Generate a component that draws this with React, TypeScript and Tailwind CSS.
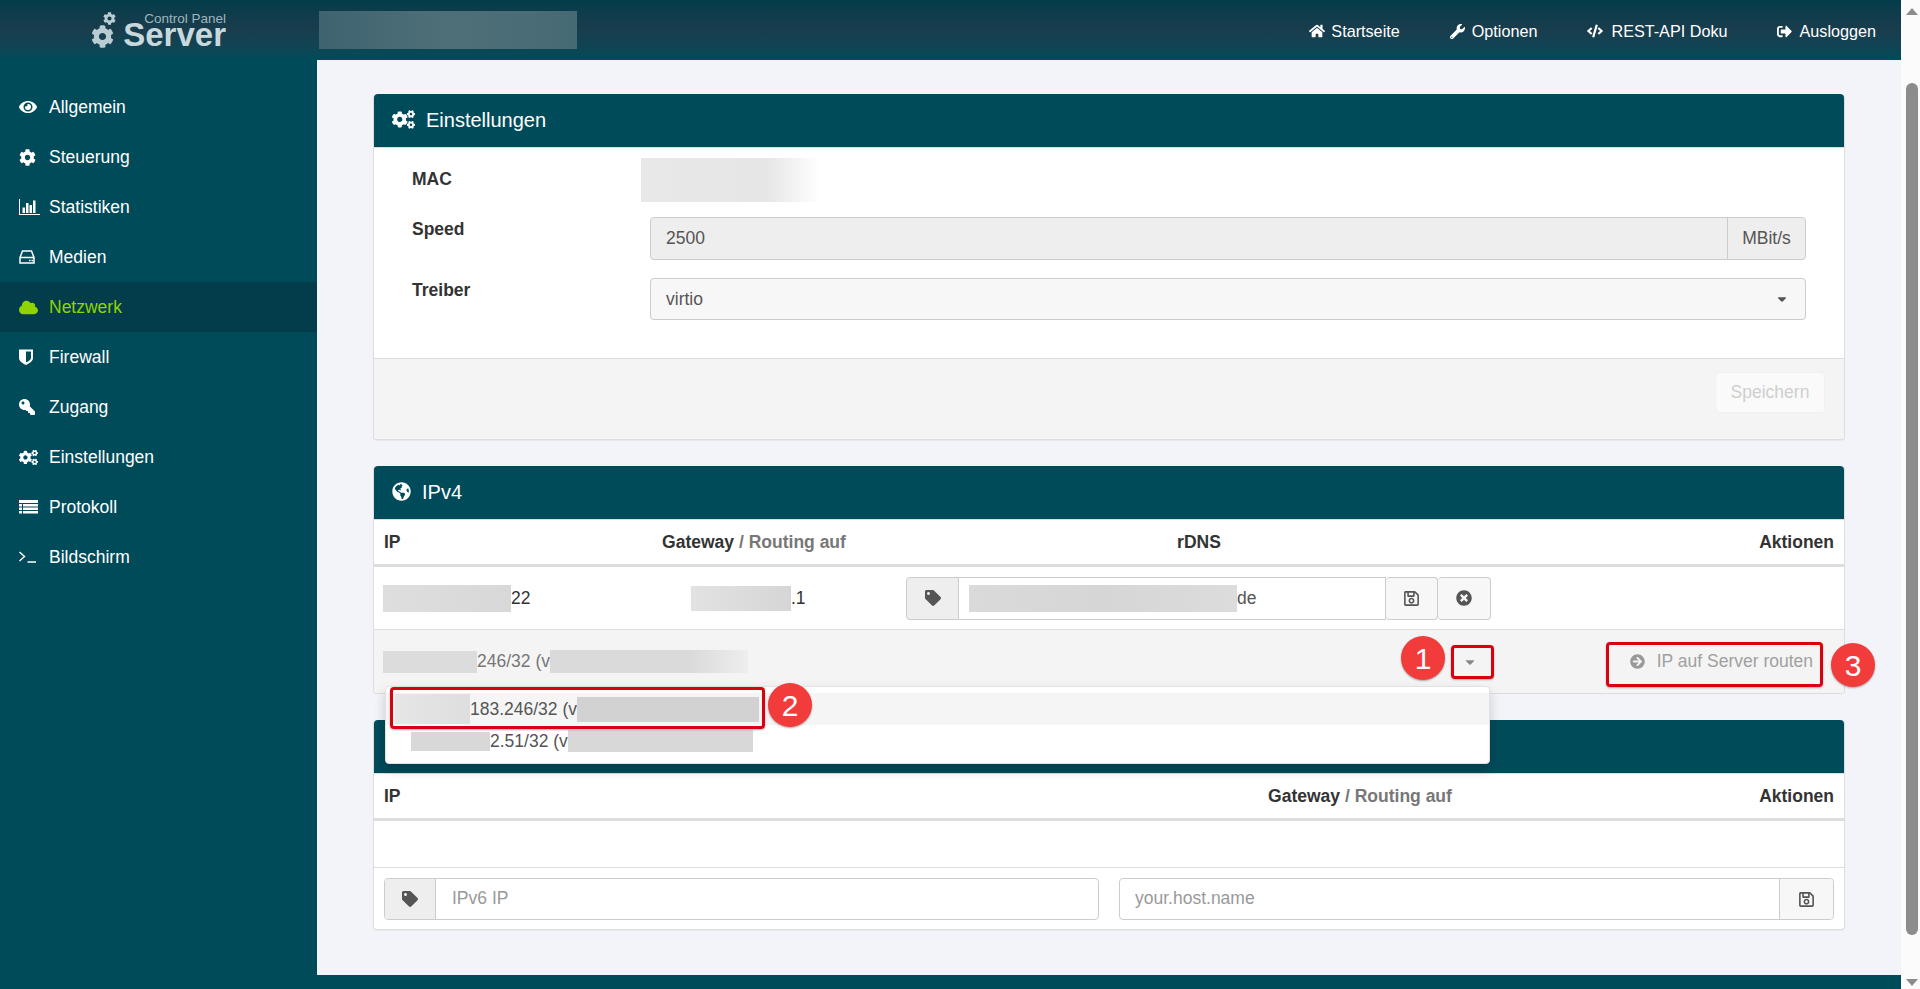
import { ReactElement, ReactNode } from "react";
import {
  FaArrowCircleRight,
  FaCaretDown,
  FaCloud,
  FaCode,
  FaCog,
  FaCogs,
  FaEye,
  FaGlobeAmericas,
  FaHome,
  FaKey,
  FaRegSave,
  FaSignOutAlt,
  FaTag,
  FaTimesCircle,
  FaWrench,
} from "react-icons/fa";

function ChartIcon(): ReactElement {
  return (
    <svg width="21" height="16" viewBox="0 0 21 16" fill="currentColor">
      <path d="M0 0h1v15h20v1H0z" />
      <path d="M3.500 8.500h2.500v5.500H3.500zM7 4h2.500v10H7zM10.500 6h2.500v8h-2.500zM14 1.500h2.500v12.500H14z" />
    </svg>
  );
}

function RowsIcon(): ReactElement {
  return (
    <svg width="19" height="15" viewBox="0 0 19 15" fill="currentColor">
      <path d="M0 0h19v3H0zM0 4h3v2.500H0zM4 4h15v2.500H4zM0 7.500h3V10H0zM4 7.500h15V10H4zM0 11h3v2.500H0zM4 11h15v2.500H4z" />
    </svg>
  );
}

function DriveIcon(): ReactElement {
  return (
    <svg width="16" height="14" viewBox="0 0 16 14" fill="none" stroke="currentColor" strokeWidth="1.500">
      <path d="M3.500 1h9l2.500 6.500V13H1V7.500zM1 7.500h14" />
      <path d="M10 10.500h1.500M12.500 10.500H14" />
    </svg>
  );
}

function ShieldIcon(): ReactElement {
  return (
    <svg width="14" height="16" viewBox="0 0 14 16" fill="currentColor">
      <path
        fillRule="evenodd"
        d="M0 .500h14v8.500c0 3.500-4 5.500-7 7-3-1.500-7-3.500-7-7zM7 2.500v11c2-1 5-2.500 5-5V2.500z"
      />
    </svg>
  );
}

function PromptIcon(): ReactElement {
  return (
    <svg width="17" height="12" viewBox="0 0 17 12" fill="none" stroke="currentColor" strokeWidth="1.400">
      <path d="M.500 1l5 4.500-5 4.500M8.500 11H17" />
    </svg>
  );
}

interface NavItem {
  label: string;
  icon: ReactNode;
  active?: boolean;
}

const navItems: NavItem[] = [
  { label: "Allgemein", icon: <FaEye size={18} /> },
  { label: "Steuerung", icon: <FaCog size={17} /> },
  { label: "Statistiken", icon: <ChartIcon /> },
  { label: "Medien", icon: <DriveIcon /> },
  { label: "Netzwerk", icon: <FaCloud size={19} />, active: true },
  { label: "Firewall", icon: <ShieldIcon /> },
  { label: "Zugang", icon: <FaKey size={16} className="-scale-x-100" /> },
  { label: "Einstellungen", icon: <FaCogs size={19} /> },
  { label: "Protokoll", icon: <RowsIcon /> },
  { label: "Bildschirm", icon: <PromptIcon /> },
];

function Blur({ className }: { className: string }): ReactElement {
  return <div className={`shrink-0 ${className}`} />;
}

function Badge({ n, className }: { n: number; className: string }): ReactElement {
  return (
    <div
      className={`absolute z-20 w-[44px] h-[44px] rounded-full bg-[#f23c3c] text-white text-[30px] flex items-center justify-center shadow-[0_1px_2px_rgba(0,0,0,0.35)] ${className}`}
    >
      {n}
    </div>
  );
}

function RedBox({ className }: { className: string }): ReactElement {
  return <div className={`absolute z-20 border-[3px] border-[#d9000f] rounded-[4px] shadow-[0_1px_2px_rgba(0,0,0,0.3)] ${className}`} />;
}

function PanelHeader({ icon, title }: { icon: ReactNode; title: string }): ReactElement {
  return (
    <div className="h-[54px] pb-[2px] bg-[#004b5a] text-white rounded-t-[4px] flex items-center pl-[18px] gap-[11px] text-[20px] border-b border-[#dddddd]">
      {icon}
      <span>{title}</span>
    </div>
  );
}

export default function App(): ReactElement {
  return (
    <div className="h-[989px] w-[1920px] overflow-hidden flex font-['Liberation_Sans',Arial,sans-serif] text-[17.5px] text-[#333333]">
      <div className="w-[1901px] flex flex-col">
        {/* top bar */}
        <header className="h-[60px] shrink-0 bg-gradient-to-b from-[#033c4a] via-[#193d4d] to-[#004b5a] flex items-center text-white">
          <div className="w-[317px] shrink-0 self-start pt-[12px] pl-[91px] flex items-start gap-[6px] text-[#c8d8dd]">
            <div className="flex flex-col items-end w-[25px] text-[#b8ccd1]">
              <FaCog size={13} />
              <FaCog size={23} className="mr-[2px]" />
            </div>
            <div className="flex flex-col items-end w-[104px]">
              <span className="text-[13.500px] leading-[13px] text-[#9fb6bc] whitespace-nowrap">Control Panel</span>
              <span className="text-[33px] leading-[19px] font-bold">Server</span>
            </div>
          </div>
          <Blur className="w-[258px] h-[38px] ml-[2px] bg-gradient-to-r from-[#3e6470] via-[#4f6f78] to-[#466a75]" />
          <nav className="ml-auto pr-[25px] pt-[3px] flex items-center gap-[50px] text-[16.200px]">
            <div className="flex items-center gap-[6px]"><FaHome size={16} />Startseite</div>
            <div className="flex items-center gap-[7px]"><FaWrench size={15} />Optionen</div>
            <div className="flex items-center gap-[8px]"><FaCode size={16} />REST-API Doku</div>
            <div className="flex items-center gap-[7px]"><FaSignOutAlt size={15} />Ausloggen</div>
          </nav>
        </header>

        <div className="flex flex-1 min-h-0">
          {/* sidebar */}
          <aside className="w-[317px] shrink-0 bg-[#004b5a] pt-[22px] text-white">
            {navItems.map((item: NavItem) => (
              <div
                key={item.label}
                className={`h-[50px] flex items-center pl-[19px] ${item.active ? "bg-[#033c4b] text-[#8fd400]" : ""}`}
              >
                <span className="w-[30px] flex items-center shrink-0">{item.icon}</span>
                {item.label}
              </div>
            ))}
          </aside>

          {/* main */}
          <main className="flex-1 bg-[#f3f4f9] pt-[34px] pl-[56px] pr-[56px] flex flex-col gap-[26px]">
            {/* Einstellungen */}
            <section className="border border-[#dddddd] border-t-0 rounded-[4px] bg-white shadow-[0_1px_1px_rgba(0,0,0,0.05)]">
              <PanelHeader icon={<FaCogs size={23} />} title="Einstellungen" />
              <div className="pl-[38px] pr-[38px] pt-[9px] pb-[38px]">
                <div className="flex h-[60px]">
                  <div className="w-[238px] pt-[9px] font-bold">MAC</div>
                  <Blur className="w-[179px] h-[44px] mt-[1px] -ml-[9px] bg-gradient-to-r from-[#e8e8e8] via-[#e6e6e6] via-70% to-white" />
                </div>
                <div className="flex">
                  <div className="w-[238px] -mt-[1px] font-bold">Speed</div>
                  <div className="flex-1 h-[43px] flex border border-[#cccccc] rounded-[4px] bg-[#eeeeee] text-[#555555]">
                    <div className="flex-1 flex items-center pl-[15px]">2500</div>
                    <div className="w-[78px] border-l border-[#cccccc] flex items-center justify-center">MBit/s</div>
                  </div>
                </div>
                <div className="flex mt-[18px]">
                  <div className="w-[238px] -mt-[1px] font-bold">Treiber</div>
                  <div className="flex-1 h-[42px] flex items-center justify-between border border-[#cccccc] rounded-[4px] bg-[#f7f7f7] text-[#555555] pl-[15px] pr-[16px]">
                    virtio
                    <FaCaretDown size={14} className="text-[#555555]" />
                  </div>
                </div>
              </div>
              <div className="h-[81px] bg-[#f4f4f4] border-t border-[#dddddd] rounded-b-[4px] flex justify-end pt-[14px] pr-[19px]">
                <div className="w-[110px] h-[41px] -mt-[1px] rounded-[4px] border border-[#f0f0f0] bg-[#fafafa] text-[#cfcfcf] flex items-center justify-center">
                  Speichern
                </div>
              </div>
            </section>

            {/* IPv4 */}
            <section className="border border-[#dddddd] border-t-0 rounded-[4px] bg-white">
              <PanelHeader icon={<FaGlobeAmericas size={19} />} title="IPv4" />
              <div className="h-[47px] grid grid-cols-[238px_284px_606px_1fr] items-center border-b-[3px] border-[#dddddd] font-bold">
                <div className="pl-[10px]">IP</div>
                <div className="text-center">
                  Gateway <span className="text-[#777777]">/ Routing auf</span>
                </div>
                <div className="text-center">rDNS</div>
                <div className="text-right pr-[10px]">Aktionen</div>
              </div>
              <div className="h-[63px] grid grid-cols-[238px_284px_606px_1fr] items-center border-b border-[#dddddd]">
                <div className="pl-[9px] flex items-center">
                  <Blur className="w-[128px] h-[27px] bg-gradient-to-r from-[#dedede] to-[#d8d8d8]" />
                  22
                </div>
                <div className="pl-[79px] flex items-center">
                  <Blur className="w-[100px] h-[25px] bg-gradient-to-r from-[#e2e2e2] to-[#d6d6d6]" />
                  .1
                </div>
                <div className="pl-[10px] flex h-[43px]">
                  <div className="w-[53px] flex items-center justify-center border border-[#cccccc] bg-[#eeeeee] rounded-l-[4px] text-[#555555]">
                    <FaTag size={16} />
                  </div>
                  <div className="w-[427px] flex items-center pl-[10px] border-y border-r border-[#cccccc] text-[#555555]">
                    <Blur className="w-[268px] h-[27px] bg-gradient-to-r from-[#dadada] via-[#d6d6d6] to-[#dcdcdc]" />
                    de
                  </div>
                  <div className="w-[52px] flex items-center justify-center border-y border-r border-[#cccccc] bg-[#f7f7f7] rounded-[4px] text-[#555555]">
                    <FaRegSave size={17} />
                  </div>
                  <div className="w-[53px] flex items-center justify-center border-y border-r border-[#cccccc] bg-[#f7f7f7] rounded-[4px] text-[#555555]">
                    <FaTimesCircle size={16} />
                  </div>
                </div>
              </div>
              <div className="relative h-[63px] bg-[#f4f4f4] rounded-b-[4px] flex items-center pl-[9px] pr-[31px] text-[#777777]">
                <div className="flex items-center">
                  <Blur className="w-[94px] h-[22px] bg-[#dcdcdc]" />
                  246/32 (v
                  <Blur className="w-[198px] h-[23px] bg-gradient-to-r from-[#dadada] via-[#dadada] via-70% to-[#eeeeee]" />
                </div>
                <div className="ml-auto mr-[139px] w-[42px] flex justify-center text-[#888888]">
                  <FaCaretDown size={14} />
                </div>
                <div className="flex items-center gap-[12px] text-[#a0a0a0]">
                  <FaArrowCircleRight size={15} className="text-[#999999]" />
                  IP auf Server routen
                </div>

                <div className="absolute z-10 left-[11px] top-[56px] w-[1105px] h-[78px] pt-[6px] bg-white border border-[#e2e2e2] rounded-[4px] shadow-[0_6px_12px_rgba(0,0,0,0.175)] text-[#555555]">
                  <div className="h-[32px] bg-[#f5f5f5] flex items-center pl-[9px]">
                    <Blur className="w-[75px] h-[30px] bg-gradient-to-r from-[#e6e6e6] to-[#dedede]" />
                    183.246/32 (v
                    <Blur className="w-[182px] h-[25px] bg-[#d2d2d2]" />
                  </div>
                  <div className="h-[32px] flex items-center pl-[25px]">
                    <Blur className="w-[79px] h-[19px] bg-[#d8d8d8]" />
                    2.51/32 (v
                    <Blur className="w-[185px] h-[22px] bg-[#d8d8d8]" />
                  </div>
                </div>

                <Badge n={1} className="left-[1027px] top-[6px]" />
                <RedBox className="left-[1077px] top-[15px] w-[43px] h-[34px]" />
                <RedBox className="left-[16px] top-[57px] w-[375px] h-[42px]" />
                <Badge n={2} className="left-[394px] top-[53px]" />
                <RedBox className="left-[1232px] top-[12px] w-[217px] h-[45px]" />
                <Badge n={3} className="left-[1457px] top-[13px]" />
              </div>
            </section>

            {/* IPv6 */}
            <section className="border border-[#dddddd] border-t-0 rounded-[4px] bg-white shadow-[0_1px_1px_rgba(0,0,0,0.05)]">
              <PanelHeader icon={<FaGlobeAmericas size={19} />} title="IPv6" />
              <div className="h-[47px] grid grid-cols-[786px_400px_1fr] items-center border-b-[3px] border-[#dddddd] font-bold">
                <div className="pl-[10px]">IP</div>
                <div className="text-center">
                  Gateway <span className="text-[#777777]">/ Routing auf</span>
                </div>
                <div className="text-right pr-[10px]">Aktionen</div>
              </div>
              <div className="h-[47px] border-b border-[#dddddd]" />
              <div className="h-[61px] flex items-start gap-[20px] pt-[10px] px-[10px]">
                <div className="w-[715px] h-[42px] flex border border-[#cccccc] rounded-[4px]">
                  <div className="w-[51px] flex items-center justify-center bg-[#eeeeee] border-r border-[#cccccc] rounded-l-[4px] text-[#555555]">
                    <FaTag size={16} />
                  </div>
                  <input
                    placeholder="IPv6 IP"
                    className="flex-1 pl-[16px] pb-[1px] rounded-r-[4px] outline-none placeholder:text-[#999999]"
                  />
                </div>
                <div className="flex-1 h-[42px] flex border border-[#cccccc] rounded-[4px]">
                  <input
                    placeholder="your.host.name"
                    className="flex-1 pl-[15px] pb-[1px] outline-none rounded-l-[4px] placeholder:text-[#999999]"
                  />
                  <div className="w-[54px] flex items-center justify-center bg-[#f7f7f7] border-l border-[#cccccc] rounded-r-[4px] text-[#555555]">
                    <FaRegSave size={17} />
                  </div>
                </div>
              </div>
            </section>
          </main>
        </div>
        <div className="h-[14px] shrink-0 bg-[#004b5a]" />
      </div>

      {/* scrollbar */}
      <div className="w-[19px] shrink-0 bg-[#fbfbfb] flex flex-col items-center pl-[3px]">
        <div className="mt-[8px] w-0 h-0 border-x-[6px] border-x-transparent border-b-[7px] border-b-[#8c8c8c]" />
        <div className="mt-[68px] w-[12px] h-[852px] rounded-[6px] bg-[#8c8c8c]" />
        <div className="mt-[44px] w-0 h-0 border-x-[6px] border-x-transparent border-t-[7px] border-t-[#8c8c8c]" />
      </div>
    </div>
  );
}
